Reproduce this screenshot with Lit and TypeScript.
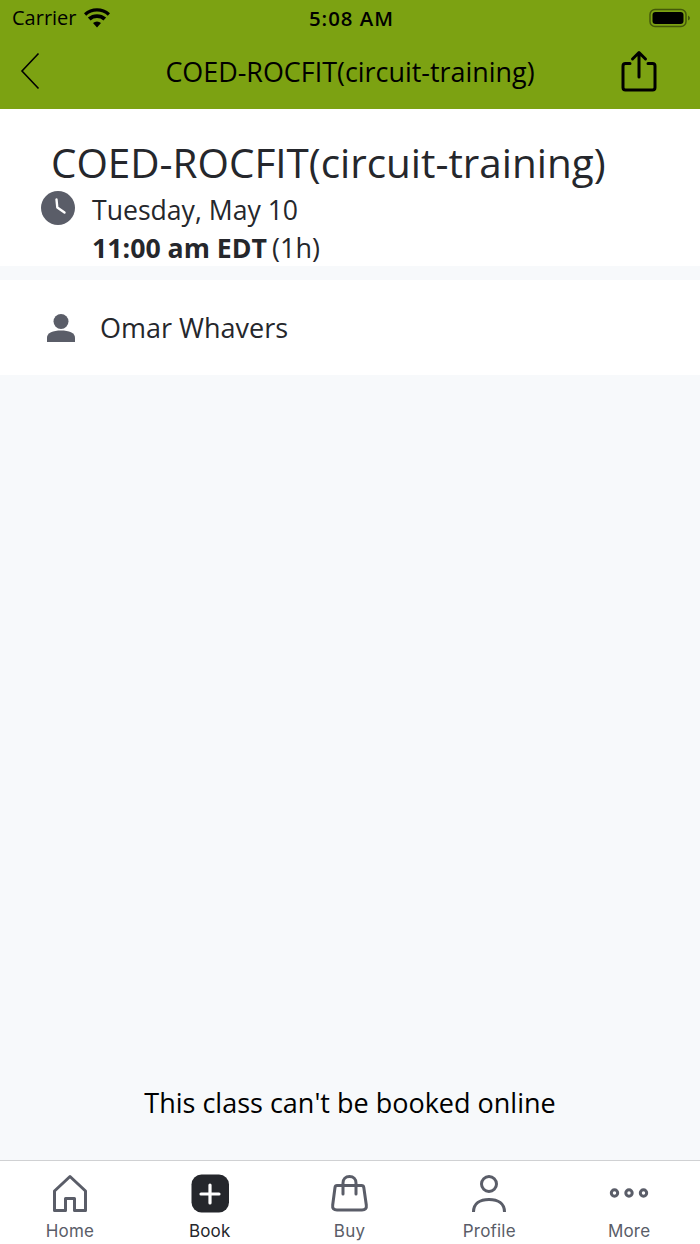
import { LitElement, html, css } from "lit";
import { customElement } from "lit/decorators.js";

const tabs = [
  { label: "Home", active: false, icon: html`<svg width="40" height="40" viewBox="0 0 40 40"><path d="M4.5 36.5V17L20 2.5 35.5 17V36.5H24.5V24.5H15.5V36.5Z" fill="none" stroke="#5a5d68" stroke-width="3" stroke-linejoin="round"/></svg>` },
  { label: "Book", active: true, icon: html`<svg width="40" height="40" viewBox="0 0 40 40"><rect x="1.5" y="0.5" width="37.5" height="38" rx="10" fill="#25272c"/><path d="M20 11V29M11 20H29" stroke="#fff" stroke-width="3.2" stroke-linecap="round"/></svg>` },
  { label: "Buy", active: false, icon: html`<svg width="40" height="40" viewBox="0 0 40 40"><path d="M8 11.5H32.5Q34.5 11.5 34.8 13.5L37.3 31Q38 36 33 36H8Q3 36 3.7 31L6 13.5Q6.3 11.5 8 11.5Z" fill="none" stroke="#5a5d68" stroke-width="3" stroke-linejoin="round"/><path d="M14 20V9C14 5 16.5 2.5 20.5 2.5S27 5 27 9V20" fill="none" stroke="#5a5d68" stroke-width="3" stroke-linecap="round"/></svg>` },
  { label: "Profile", active: false, icon: html`<svg width="40" height="40" viewBox="0 0 40 40"><circle cx="20" cy="10" r="7.5" fill="none" stroke="#5a5d68" stroke-width="3"/><path d="M4.5 38C4.5 29.5 11 25.5 20 25.5S35.5 29.5 35.5 38" fill="none" stroke="#5a5d68" stroke-width="3"/></svg>` },
  { label: "More", active: false, icon: html`<svg width="40" height="40" viewBox="0 0 40 40"><g fill="none" stroke="#5a5d68" stroke-width="3"><circle cx="5.5" cy="19" r="3.2"/><circle cx="20" cy="19" r="3.2"/><circle cx="34.5" cy="19" r="3.2"/></g></svg>` },
];

@customElement("app-root")
export class AppRoot extends LitElement {
  static styles = css`
    :host { display: block; width: 700px; height: 1244px; font-family: "Open Sans", sans-serif; color: #25272c; background: #f7f9fb; }
    .page { display: flex; flex-direction: column; height: 1244px; overflow: hidden; }
    .top { background: #7ca212; height: 109px; display: flex; flex-direction: column; color: #000; flex: none; }
    .status { height: 35px; display: grid; grid-template-columns: 1fr auto 1fr; align-items: center; padding: 0 9px 0 12px; }
    .status-left { display: flex; align-items: center; gap: 7px; font-size: 20px; }
    .time { font-size: 20.4px; font-weight: 600; letter-spacing: 1px; }
    .status-right { display: flex; justify-content: flex-end; }
    .nav { flex: 1; display: grid; grid-template-columns: 80px 1fr 80px; align-items: center; padding-bottom: 2px; }
    .back { padding-left: 20px; display: flex; }
    .title { text-align: center; font-size: 26.9px; white-space: nowrap; }
    .share { display: flex; justify-content: flex-end; padding-right: 43px; }
    .head { background: #fff; height: 157px; flex: none; padding: 27px 0 0 41px; box-sizing: border-box; }
    h1 { margin: 0 0 0 10px; font-weight: 400; font-size: 40.4px; line-height: 54px; white-space: nowrap; }
    .when { display: flex; gap: 17px; }
    .clock { margin-top: 1px; flex: none; }
    .lines { padding-top: 2px; }
    .date { font-size: 26.6px; line-height: 37px; }
    .hour { font-size: 27px; line-height: 38px; }
    .hour b { font-weight: 700; font-size: 26.7px; margin-right: 5px; }
    .person { background: #fff; margin-top: 14px; height: 95px; flex: none; display: flex; align-items: center; padding-left: 47px; gap: 25px; font-size: 27px; }
    .main { flex: 1; display: flex; align-items: flex-end; justify-content: center; padding-bottom: 39px; font-size: 27px; color: #000; }
    .tabs { height: 83px; flex: none; background: #fff; border-top: 1px solid #d0d1d3; display: grid; grid-template-columns: repeat(5, 1fr); padding-right: 1px; }
    .tab { display: flex; flex-direction: column; align-items: center; padding-top: 13px; font-family: Inter, sans-serif; font-size: 17px; letter-spacing: .2px; color: #5a5d68; }
    .tab.active { color: #25272c; }
    .tab span { margin-top: 7px; line-height: 20px; }
  `;

  render() {
    return html`<div class="page">
      <div class="top">
        <div class="status">
          <div class="status-left">Carrier
            <svg width="26" height="20" viewBox="0 0 26 20"><path d="M13 19.5 9 15a6 6 0 0 1 8 0ZM6.5 12.5 3.9 9.6a14 14 0 0 1 18.2 0l-2.6 2.9a10 10 0 0 0-13 0ZM2.2 7.7 0 5.2a19.5 19.5 0 0 1 26 0l-2.2 2.5a16 16 0 0 0-21.6 0Z" fill="#000"/></svg>
          </div>
          <div class="time">5:08 AM</div>
          <div class="status-right">
            <svg width="42" height="20" viewBox="0 0 42 20"><rect x="1" y="1.5" width="36" height="17" rx="5" fill="none" stroke="#000" stroke-opacity=".45" stroke-width="1.5"/><rect x="3.5" y="4" width="31" height="12" rx="3" fill="#000"/><path d="M39 7.5q2 1 2 2.5t-2 2.5Z" fill="#000" fill-opacity=".45"/></svg>
          </div>
        </div>
        <div class="nav">
          <div class="back"><svg width="20" height="38" viewBox="0 0 20 38"><path d="M18.5 1.5 2 19 18.5 36.5" fill="none" stroke="#000" stroke-width="1.6"/></svg></div>
          <div class="title">COED-ROCFIT(circuit-training)</div>
          <div class="share"><svg width="36" height="42" viewBox="0 0 36 42"><path d="M9 13.5H4.5Q2 13.5 2 16V37.5Q2 40 4.5 40H31.5Q34 40 34 37.5V16Q34 13.5 31.5 13.5H27" fill="none" stroke="#000" stroke-width="3" stroke-linecap="round"/><path d="M18 27V3M11.5 9 18 2.5 24.5 9" fill="none" stroke="#000" stroke-width="3" stroke-linecap="round" stroke-linejoin="round"/></svg></div>
        </div>
      </div>
      <div class="head">
        <h1>COED-ROCFIT(circuit-training)</h1>
        <div class="when">
          <svg class="clock" width="34" height="34" viewBox="0 0 34 34"><circle cx="17" cy="17" r="17" fill="#5a5d68"/><path d="M15.5 8.5 16.3 16.5 23.5 21.5" fill="none" stroke="#fff" stroke-width="2.4" stroke-linecap="round" stroke-linejoin="round"/></svg>
          <div class="lines">
            <div class="date">Tuesday, May 10</div>
            <div class="hour"><b>11:00 am EDT</b>(1h)</div>
          </div>
        </div>
      </div>
      <div class="person">
        <svg width="28" height="28" viewBox="0 0 28 28"><circle cx="14" cy="7.5" r="7.5" fill="#5a5d68"/><path d="M0 28V23.5C0 19 6 16.5 14 16.5S28 19 28 23.5V28Z" fill="#5a5d68"/></svg>
        <span>Omar Whavers</span>
      </div>
      <div class="main">This class can't be booked online</div>
      <div class="tabs">
        ${tabs.map((t) => html`<div class="tab ${t.active ? "active" : ""}">${t.icon}<span>${t.label}</span></div>`)}
      </div>
    </div>`;
  }
}
